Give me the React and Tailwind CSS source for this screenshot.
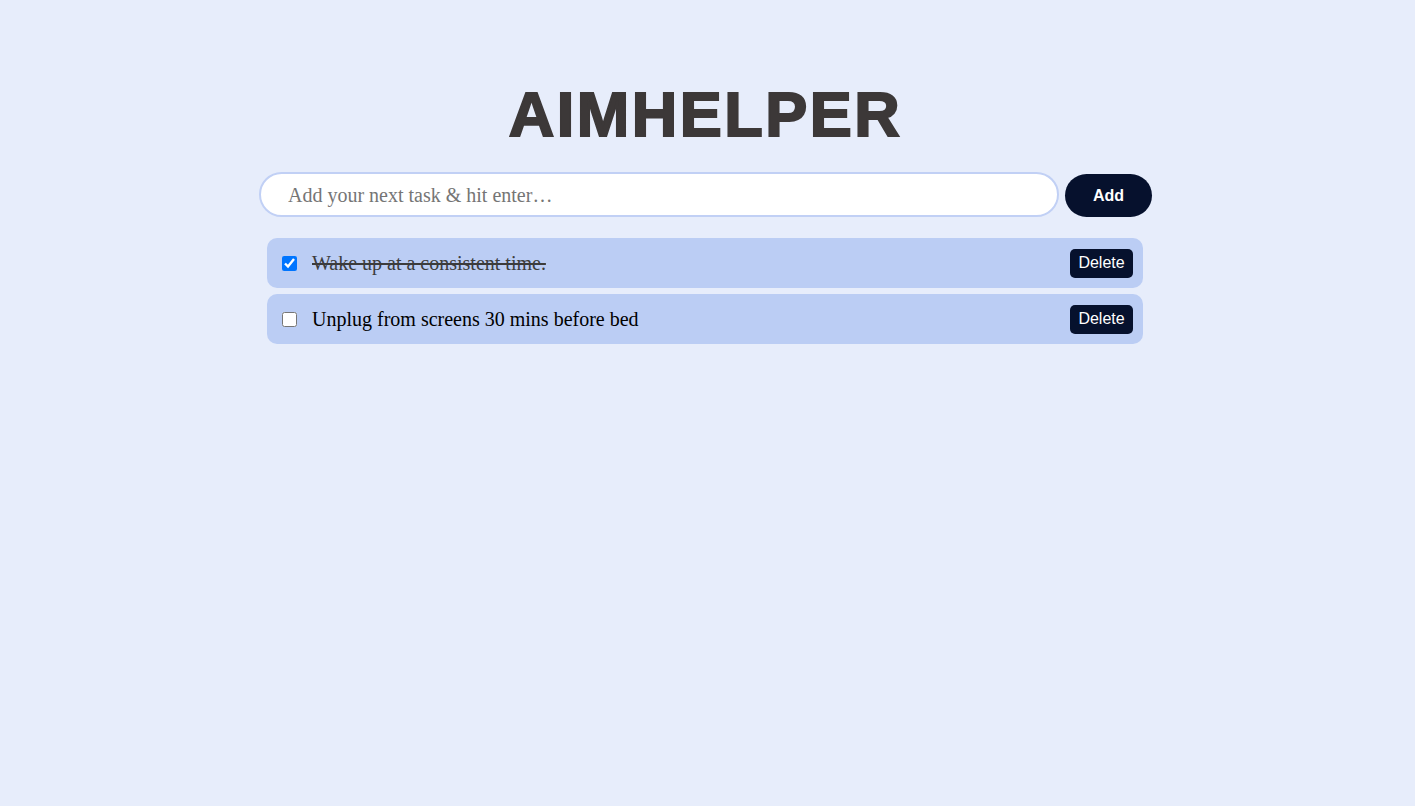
import { useState } from "react";

export default function App() {
    const [tasks, setTasks] = useState([
        { id: 1, text: "Wake up at a consistent time.", done: true },
        { id: 2, text: "Unplug from screens 30 mins before bed", done: false },
    ]);
    const [draft, setDraft] = useState("");

    const addTask = () => {
        if (!draft.trim()) return;
        setTasks([...tasks, { id: Date.now(), text: draft.trim(), done: false }]);
        setDraft("");
    };

    return (
        <div className="min-h-screen w-full bg-[#e7edfb] flex flex-col items-center pt-[78px]">
            <h1 className="font-['Liberation_Sans',Arial,sans-serif] font-bold text-[63px] leading-[72px] tracking-[2.5px] text-[#3c3838] [-webkit-text-stroke:2px_#3c3838] ml-[-4px]">
                AIMHELPER
            </h1>

            {/* input row */}
            <div className="flex items-end gap-[6px] mt-[22px] ml-[-4px]">
                <input
                    value={draft}
                    onChange={(e) => setDraft(e.target.value)}
                    onKeyDown={(e) => e.key === "Enter" && addTask()}
                    placeholder="Add your next task & hit enter…"
                    className="w-[800px] h-[45px] rounded-full border-2 border-[#c1d0f5] bg-white pl-[27px] pr-4 pt-[2px] text-[20px] font-['Liberation_Serif','Times_New_Roman',serif] text-black placeholder:text-[#757575] outline-none"
                />
                <button
                    onClick={addTask}
                    className="w-[87px] h-[43px] rounded-full bg-[#06112d] text-white font-bold text-[16px] pt-[1px] font-['Liberation_Sans',Arial,sans-serif]"
                >
                    Add
                </button>
            </div>

            {/* task list */}
            <div className="flex flex-col gap-[6px] mt-[21px] w-[876px] ml-[-5px]">
                {tasks.map((t) => (
                    <div key={t.id} className="h-[50px] rounded-[10px] bg-[#bbcdf4] flex items-center pl-[15px] pr-[10px]">
                        <input
                            type="checkbox"
                            checked={t.done}
                            onChange={() => setTasks(tasks.map((x) => (x.id === t.id ? { ...x, done: !x.done } : x)))}
                            className="w-[15px] h-[15px] m-0 accent-[#0075ff]"
                        />
                        <span
                            className={
                                "ml-[15px] flex-1 text-[20px] font-['Liberation_Serif','Times_New_Roman',serif] " +
                                (t.done ? "line-through text-[#3c3c3c]" : "text-black")
                            }
                        >
                            {t.text}
                        </span>
                        <button
                            onClick={() => setTasks(tasks.filter((x) => x.id !== t.id))}
                            className="h-[29px] w-[63px] rounded-[5px] bg-[#06112d] text-white text-[16px] font-['Liberation_Sans',Arial,sans-serif]"
                        >
                            Delete
                        </button>
                    </div>
                ))}
            </div>
        </div>
    );
}
